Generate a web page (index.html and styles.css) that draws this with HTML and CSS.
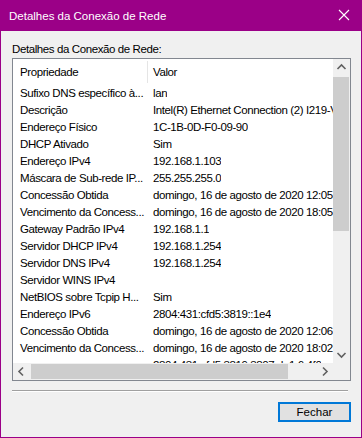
FILE: index.html
```html
<!DOCTYPE html>
<html lang="pt-BR">
<head>
    <meta charset="UTF-8">
    <title>Detalhes da Conexão de Rede</title>
    <link rel="stylesheet" href="styles.css">
</head>
<body>
    <div class="window">
        <div class="titlebar">
            <span class="title">Detalhes da Conexão de Rede</span>
            <svg class="close" width="12" height="12" viewBox="0 0 12 12">
                <path d="M1 1 L11 11 M11 1 L1 11" stroke="#fff" stroke-width="1.1" fill="none"/>
            </svg>
        </div>

        <div class="content">
            <div class="caption">Detalhes da Conexão de Rede:</div>

            <div class="listbox">
                <div class="list">
                    <div class="row header">
                        <div class="col1">Propriedade</div>
                        <div class="col2">Valor</div>
                    </div>
                    <div class="row"><div class="col1">Sufixo DNS específico à...</div><div class="col2">lan</div></div>
                    <div class="row"><div class="col1">Descrição</div><div class="col2">Intel(R) Ethernet Connection (2) I219-V</div></div>
                    <div class="row"><div class="col1">Endereço Físico</div><div class="col2">1C-1B-0D-F0-09-90</div></div>
                    <div class="row"><div class="col1">DHCP Ativado</div><div class="col2">Sim</div></div>
                    <div class="row"><div class="col1">Endereço IPv4</div><div class="col2">192.168.1.103</div></div>
                    <div class="row"><div class="col1">Máscara de Sub-rede IP...</div><div class="col2">255.255.255.0</div></div>
                    <div class="row"><div class="col1">Concessão Obtida</div><div class="col2">domingo, 16 de agosto de 2020 12:05:31</div></div>
                    <div class="row"><div class="col1">Vencimento da Concess...</div><div class="col2">domingo, 16 de agosto de 2020 18:05:31</div></div>
                    <div class="row"><div class="col1">Gateway Padrão IPv4</div><div class="col2">192.168.1.1</div></div>
                    <div class="row"><div class="col1">Servidor DHCP IPv4</div><div class="col2">192.168.1.254</div></div>
                    <div class="row"><div class="col1">Servidor DNS IPv4</div><div class="col2">192.168.1.254</div></div>
                    <div class="row"><div class="col1">Servidor WINS IPv4</div><div class="col2"></div></div>
                    <div class="row"><div class="col1">NetBIOS sobre Tcpip H...</div><div class="col2">Sim</div></div>
                    <div class="row"><div class="col1">Endereço IPv6</div><div class="col2">2804:431:cfd5:3819::1e4</div></div>
                    <div class="row"><div class="col1">Concessão Obtida</div><div class="col2">domingo, 16 de agosto de 2020 12:06:10</div></div>
                    <div class="row"><div class="col1">Vencimento da Concess...</div><div class="col2">domingo, 16 de agosto de 2020 18:02:10</div></div>
                    <div class="row"><div class="col1"></div><div class="col2">2804:431:cfd5:3819:3807:de1:6:4f0</div></div>
                </div>

                <div class="vscroll">
                    <svg class="arrow" width="17" height="17" viewBox="0 0 17 17">
                        <path d="M4.5 10 L8.5 6 L12.5 10" stroke="#606060" stroke-width="1.6" fill="none"/>
                    </svg>
                    <div class="vtrack"><div class="vthumb"></div></div>
                    <svg class="arrow" width="17" height="17" viewBox="0 0 17 17">
                        <path d="M4.5 7 L8.5 11 L12.5 7" stroke="#606060" stroke-width="1.6" fill="none"/>
                    </svg>
                </div>

                <div class="hscroll">
                    <svg class="arrow" width="17" height="17" viewBox="0 0 17 17">
                        <path d="M10 4.5 L6 8.5 L10 12.5" stroke="#606060" stroke-width="1.6" fill="none"/>
                    </svg>
                    <div class="htrack"><div class="hthumb"></div></div>
                    <svg class="arrow" width="17" height="17" viewBox="0 0 17 17">
                        <path d="M7 4.5 L11 8.5 L7 12.5" stroke="#606060" stroke-width="1.6" fill="none"/>
                    </svg>
                </div>

                <div class="corner"></div>
            </div>

            <div class="separator"></div>

            <div class="buttons">
                <button class="btn">Fechar</button>
            </div>
        </div>
    </div>
</body>
</html>
```

FILE: styles.css
```css
* {
    margin: 0;
    padding: 0;
    box-sizing: border-box;
}

body {
    font-family: "Liberation Sans", Arial, sans-serif;
    font-size: 11.5px;
    letter-spacing: -0.4px;
    color: #000;
    background: #f0f0f0;
}

.window {
    width: 362px;
    height: 438px;
    border: 1px solid #9b0087;
    border-top: none;
    background: #f0f0f0;
    display: flex;
    flex-direction: column;
}

.titlebar {
    height: 31px;
    margin: 0 -1px;
    background: #9b0087;
    color: #fff;
    display: flex;
    align-items: center;
    justify-content: space-between;
    padding: 0 12px 0 9px;
}

.title {
    font-size: 11.5px;
    letter-spacing: 0;
}

.close {
    display: block;
    margin-top: -2px;
}

.content {
    padding: 10px 10px 0 11px;
}

.caption {
    height: 16px;
    line-height: 16px;
    margin-bottom: 1px;
}

.listbox {
    width: 339px;
    height: 323px;
    border: 1px solid #828790;
    background: #fff;
    display: grid;
    grid-template-columns: 1fr 17px;
    grid-template-rows: 1fr 17px;
}

.list {
    overflow: hidden;
}

.row {
    display: flex;
    height: 17px;
    line-height: 17px;
    white-space: nowrap;
}

.row.header {
    height: 26px;
    line-height: 26px;
}

.col1 {
    width: 134px;
    flex: none;
    padding-left: 7px;
    overflow: hidden;
}

.col2 {
    padding-left: 6px;
    overflow: hidden;
}

.header .col2 {
    border-left: 1px solid #e5e5e5;
    padding-left: 5px;
    height: 22px;
    line-height: 22px;
    margin-top: 2px;
    flex: 1;
}

.vscroll {
    background: #f0f0f0;
    display: flex;
    flex-direction: column;
}

.vtrack {
    flex: 1;
    padding: 1px 1px 0 0;
}

.vthumb {
    height: 154px;
    background: #cdcdcd;
}

.hscroll {
    background: #f0f0f0;
    display: flex;
}

.htrack {
    flex: 1;
    padding: 1px 0 1px 1px;
}

.hthumb {
    width: 257px;
    height: 100%;
    background: #cdcdcd;
}

.arrow {
    display: block;
    flex: none;
}

.corner {
    background: #f0f0f0;
}

.separator {
    margin: 9px 3px 0 0;
    height: 2px;
    border-top: 1px solid #a0a0a0;
    border-bottom: 1px solid #fff;
}

.buttons {
    display: flex;
    justify-content: flex-end;
    padding-top: 10px;
}

.btn {
    width: 73px;
    height: 20px;
    font-family: "Liberation Sans", Arial, sans-serif;
    font-size: 11.5px;
    letter-spacing: 0;
    color: #000;
    background: #e1e1e1;
    border: 2px solid #0078d7;
}
```
